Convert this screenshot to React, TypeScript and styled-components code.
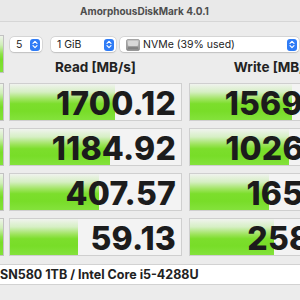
import React from "react";
import styled, { createGlobalStyle } from "styled-components";

const Global = createGlobalStyle`
  html, body { margin: 0; padding: 0; background: #ececec; overflow: hidden; }
  * { box-sizing: border-box; }
`;

const Window = styled.div`
  width: 300px;
  height: 300px;
  overflow: hidden;
  display: flex;
  flex-direction: column;
  background: #ececec;
  font-family: Inter, "Liberation Sans", sans-serif;
  color: #1d1d1d;
`;

const TitleBar = styled.div`
  height: 22px;
  flex-shrink: 0;
  display: flex;
  align-items: center;
  justify-content: center;
  padding-right: 11px;
  background: #e9e9e9;
  border-bottom: 1px solid #d6d6d6;
  font-size: 10px;
  font-weight: 700;
  color: #4d4d4d;
`;

const Body = styled.div`
  padding-top: 13px;
  display: flex;
  flex-direction: column;
`;

const Line = styled.div`
  display: flex;
  flex-shrink: 0;
`;

const SideButton = styled.div<{ $h: number }>`
  width: 4px;
  height: ${(p) => p.$h}px;
  flex-shrink: 0;
  margin-right: 5px;
  border: 1px solid #c2c2c2;
  border-left: none;
  background: linear-gradient(to bottom, #eef3ea 0%, #cfeeb8 25%, #8de248 50%, #78dd28 65%, #82e238 100%);
`;

const Controls = styled.div`
  width: 353px;
  flex-shrink: 0;
  display: flex;
  flex-direction: column;
`;

const Toolbar = styled.div`
  margin-top: 2px;
  padding-left: 1px;
  height: 15px;
  display: flex;
`;

const Select = styled.div<{ $w: number; $gap: number }>`
  width: ${(p) => p.$w}px;
  margin-right: ${(p) => p.$gap}px;
  height: 15px;
  flex-shrink: 0;
  display: flex;
  align-items: center;
  background: #ffffff;
  border-radius: 4px;
  box-shadow: 0 0 0 0.5px rgba(0, 0, 0, 0.14), 0 0.5px 1.5px rgba(0, 0, 0, 0.12);
  padding-left: 6px;
  padding-right: 2px;
  font-size: 10.5px;
  color: #222;
`;

const SelectLabel = styled.span`
  flex: 1;
  display: flex;
  align-items: center;
  gap: 3px;
  white-space: nowrap;
`;

const Stepper = styled.span`
  width: 10px;
  height: 12px;
  border-radius: 3px;
  background: #2f7cf6;
  display: flex;
  align-items: center;
  justify-content: center;
`;

const Headers = styled.div`
  margin-top: 9px;
  display: flex;
  gap: 7px;
`;

const Header = styled.div`
  width: 173px;
  text-align: center;
  font-size: 13.5px;
  font-weight: 700;
  line-height: 13px;
  color: #222;
`;

const Rows = styled.div`
  margin-top: 9px;
  display: flex;
  flex-direction: column;
  gap: 7px;
`;

const Cell = styled.div<{ $gap: number }>`
  width: 173px;
  height: 38px;
  flex-shrink: 0;
  margin-left: ${(p) => p.$gap}px;
  border: 1px solid #cfcfcf;
  background: #f3f3f3;
  display: grid;
`;

const Bar = styled.div`
  grid-area: 1 / 1;
  height: 100%;
  background: linear-gradient(to bottom, #f0f3ee 0%, #d6efc4 22%, #9fe45f 42%, #7cde2c 55%, #78dd28 75%, #84e23c 100%);
`;

const Value = styled.div`
  grid-area: 1 / 1;
  justify-self: end;
  align-self: center;
  padding-right: 5px;
  padding-top: 3px;
  font-size: 32px;
  font-weight: 800;
  line-height: 1;
  letter-spacing: 0.2px;
  color: #1c1c1c;
  white-space: nowrap;
`;

const Footer = styled.div`
  margin-top: 8px;
  height: 21px;
  background: #ffffff;
  border-top: 1px solid #d2d2d2;
  border-bottom: 1px solid #d2d2d2;
  display: flex;
  align-items: center;
  font-size: 12.5px;
  font-weight: 700;
  color: #222;
  white-space: nowrap;
`;

const StepperIcon = () => (
  <Stepper>
    <svg width="6" height="9" viewBox="0 0 6 9">
      <path d="M1 3.3 L3 1.3 L5 3.3 M1 5.7 L3 7.7 L5 5.7" fill="none" stroke="#fff" strokeWidth="1.2" strokeLinecap="round" strokeLinejoin="round" />
    </svg>
  </Stepper>
);

const DriveIcon = () => (
  <svg width="14" height="12" viewBox="0 0 14 12">
    <defs>
      <linearGradient id="dg" x1="0" y1="0" x2="0" y2="1">
        <stop offset="0" stopColor="#c9c9c9" />
        <stop offset="0.5" stopColor="#a8a8a8" />
        <stop offset="1" stopColor="#8a8a8a" />
      </linearGradient>
    </defs>
    <rect x="0.5" y="0.5" width="13" height="11" rx="1.5" fill="url(#dg)" stroke="#7a7a7a" strokeWidth="0.6" />
    <rect x="2" y="2" width="10" height="5" rx="1" fill="#d8d8d8" />
    <rect x="2" y="8.5" width="10" height="1" fill="#6e6e6e" />
  </svg>
);

const data = [
  { read: "1700.12", rw: 105, write: "1569.84", ww: 102 },
  { read: "1184.92", rw: 100, write: "1026.35", ww: 99 },
  { read: "407.57", rw: 89, write: "165.29", ww: 79 },
  { read: "59.13", rw: 68, write: "258.61", ww: 84 },
];

export default function App() {
  return (
    <>
      <Global />
      <Window>
        <TitleBar>AmorphousDiskMark 4.0.1</TitleBar>
        <Body>
          <Line>
            <SideButton $h={38} />
            <Controls>
              <Toolbar>
                <Select $w={32} $gap={9}>
                  <SelectLabel>5</SelectLabel>
                  <StepperIcon />
                </Select>
                <Select $w={65} $gap={4}>
                  <SelectLabel>1 GiB</SelectLabel>
                  <StepperIcon />
                </Select>
                <Select $w={179} $gap={0}>
                  <SelectLabel>
                    <DriveIcon />
                    NVMe (39% used)
                  </SelectLabel>
                  <StepperIcon />
                </Select>
              </Toolbar>
              <Headers>
                <Header>Read [MB/s]</Header>
                <Header>Write [MB/s]</Header>
              </Headers>
            </Controls>
          </Line>
          <Rows>
            {data.map((d, i) => (
              <Line key={i}>
                <SideButton $h={38} />
                <Cell $gap={0}>
                  <Bar style={{ width: d.rw }} />
                  <Value>{d.read}</Value>
                </Cell>
                <Cell $gap={7}>
                  <Bar style={{ width: d.ww }} />
                  <Value>{d.write}</Value>
                </Cell>
              </Line>
            ))}
          </Rows>
          <Footer>SN580 1TB / Intel Core i5-4288U</Footer>
        </Body>
      </Window>
    </>
  );
}
